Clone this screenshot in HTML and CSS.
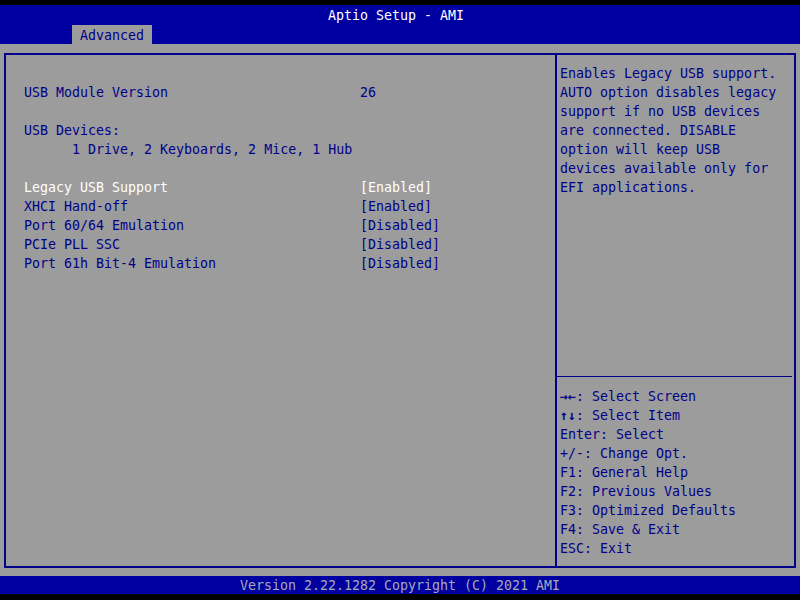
FILE: index.html
```html
<!DOCTYPE html>
<html lang="en">
<head>
  <meta charset="UTF-8">
  <title>Aptio Setup - AMI</title>
  <link rel="stylesheet" href="styles.css">
</head>
<body>
  <div class="screen">
    <div class="header">
      <div class="title">Aptio Setup - AMI</div>
      <div class="tabs">
        <span class="tab">Advanced</span>
      </div>
    </div>

    <div class="main">
      <div class="panel">
        <div class="settings">
          <div class="row">
            <span class="name">USB Module Version</span>
            <span class="value">26</span>
          </div>
          <div class="row gap">USB Devices:</div>
          <div class="row indent">1 Drive, 2 Keyboards, 2 Mice, 1 Hub</div>

          <div class="row gap selected">
            <span class="name">Legacy USB Support</span>
            <span class="value">[Enabled]</span>
          </div>
          <div class="row">
            <span class="name">XHCI Hand-off</span>
            <span class="value">[Enabled]</span>
          </div>
          <div class="row">
            <span class="name">Port 60/64 Emulation</span>
            <span class="value">[Disabled]</span>
          </div>
          <div class="row">
            <span class="name">PCIe PLL SSC</span>
            <span class="value">[Disabled]</span>
          </div>
          <div class="row">
            <span class="name">Port 61h Bit-4 Emulation</span>
            <span class="value">[Disabled]</span>
          </div>
        </div>

        <div class="side">
          <div class="help">
            <div>Enables Legacy USB support.</div>
            <div>AUTO option disables legacy</div>
            <div>support if no USB devices</div>
            <div>are connected. DISABLE</div>
            <div>option will keep USB</div>
            <div>devices available only for</div>
            <div>EFI applications.</div>
          </div>
          <div class="keys">
            <div><span class="arrows">&rarr;&larr;</span>: Select Screen</div>
            <div><span class="arrows">&uarr;&darr;</span>: Select Item</div>
            <div>Enter: Select</div>
            <div>+/-: Change Opt.</div>
            <div>F1: General Help</div>
            <div>F2: Previous Values</div>
            <div>F3: Optimized Defaults</div>
            <div>F4: Save &amp; Exit</div>
            <div>ESC: Exit</div>
          </div>
        </div>
      </div>
    </div>

    <div class="footer">Version 2.22.1282 Copyright (C) 2021 AMI</div>
  </div>
</body>
</html>
```

FILE: styles.css
```css
:root {
  --blue: #0000a0;
  --ink: #000088;
  --gray: #9c9c9c;
  --white: #ffffff;
  --row: 19px;
}
body {
  margin: 0;
  background-color: #000000;
  font-family: 'DejaVu Sans Mono', 'Liberation Mono', monospace;
  font-size: 13.3px;
}
.screen {
  width: 800px;
  height: 600px;
  display: flex;
  flex-direction: column;
  padding-top: 5px;
  box-sizing: border-box;
}
.header {
  background-color: var(--blue);
  color: var(--white);
}
.title {
  height: 20px;
  line-height: 22px;
  text-align: center;
  padding-right: 8px;
}
.tabs {
  display: flex;
  padding-left: 72px;
}
.tab {
  background-color: var(--gray);
  color: var(--ink);
  height: var(--row);
  line-height: 21px;
  padding: 0 8px;
}
.main {
  flex: 1;
  background-color: var(--gray);
  padding: 9px 4px 8px;
  display: flex;
}
.panel {
  flex: 1;
  display: grid;
  grid-template-columns: 551px 1fr;
  border: 2px solid var(--ink);
  color: var(--ink);
}
.settings {
  border-right: 2px solid var(--ink);
  padding: 28px 0 0 18px;
}
.row {
  display: flex;
  height: var(--row);
  line-height: var(--row);
  white-space: pre;
}
.row.gap {
  margin-top: var(--row);
}
.row.indent {
  padding-left: 48px;
}
.row.selected {
  color: var(--white);
}
.name {
  width: 336px;
}
.side {
  display: flex;
  flex-direction: column;
}
.help {
  padding: 9px 0 0 3px;
  line-height: var(--row);
}
.keys {
  margin-top: auto;
  margin-right: 2px;
  border-top: 1px solid var(--ink);
  padding: 10px 0 8px 3px;
  line-height: var(--row);
}
.arrows {
  font-weight: bold;
}
.footer {
  background-color: var(--blue);
  color: #a8a8b8;
  height: 18px;
  line-height: 19px;
  text-align: center;
  margin-bottom: 6px;
}
```
